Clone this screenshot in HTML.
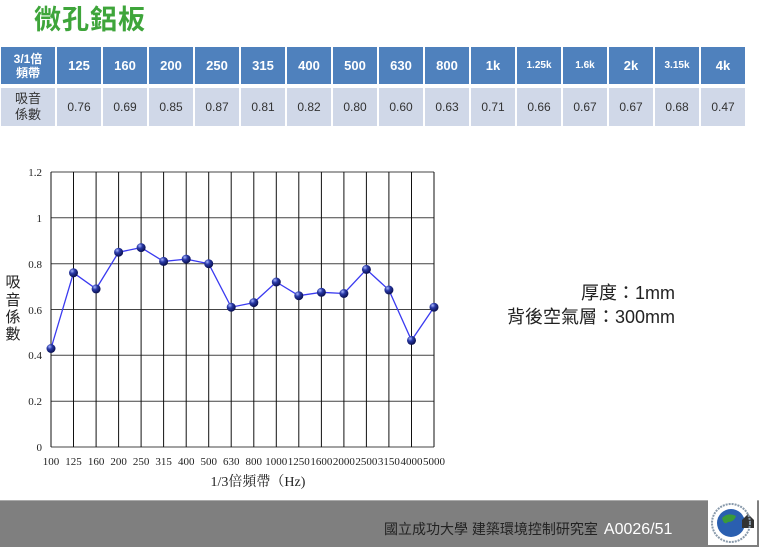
<!DOCTYPE html>
<html><head><meta charset="utf-8">
<style>
body{margin:0;width:759px;height:546px;background:#fff;position:relative;overflow:hidden;font-family:"Liberation Sans","Noto Sans CJK TC",sans-serif;}
.title{position:absolute;left:34px;top:2px;font-size:27px;color:#3ea53a;font-weight:bold;letter-spacing:1px;line-height:36px;}
table{position:absolute;left:1px;top:47px;border-collapse:separate;border-spacing:2px 4px;margin:-4px -2px;}
td{width:44px;text-align:center;padding:0;font-size:12px;}
td.f{width:54px;}
tr.h td{background:#4f81bd;color:#fff;font-weight:bold;height:37px;font-size:13px;}
tr.d td{background:#d0d8e8;color:#333;height:38px;}
.side{position:absolute;left:470px;top:281px;font-size:18px;color:#222;text-align:right;width:205px;line-height:24px;}
.foot{position:absolute;left:0;top:500px;width:759px;height:46px;background:#7f7f7f;border-top:1px solid #aaa;}
.ft{position:absolute;left:384px;top:519px;font-size:14px;color:#222;}
.ft span{color:#fff;font-size:16px;margin-left:6px;}
.logo{position:absolute;left:708px;top:500px;width:49px;height:45px;background:#fff;}
</style></head><body>
<div class="title">微孔鋁板</div>
<table>
<tr class="h"><td class="f" style="line-height:14px;font-size:12px">3/1倍<br>頻帶</td><td>125</td><td>160</td><td>200</td><td>250</td><td>315</td><td>400</td><td>500</td><td>630</td><td>800</td><td>1k</td><td style="font-size:10px">1.25k</td><td style="font-size:10px">1.6k</td><td>2k</td><td style="font-size:10px">3.15k</td><td>4k</td></tr>
<tr class="d"><td class="f" style="font-size:13px;line-height:16px;font-weight:normal">吸音<br>係數</td><td>0.76</td><td>0.69</td><td>0.85</td><td>0.87</td><td>0.81</td><td>0.82</td><td>0.80</td><td>0.60</td><td>0.63</td><td>0.71</td><td>0.66</td><td>0.67</td><td>0.67</td><td>0.68</td><td>0.47</td></tr>
</table>
<svg style="position:absolute;left:0;top:0" width="759" height="500" font-family="Liberation Serif,Noto Serif CJK SC,serif">
<defs><radialGradient id="g" cx="35%" cy="30%" r="70%"><stop offset="0" stop-color="#aab8ff"/><stop offset="0.4" stop-color="#2a3aa8"/><stop offset="1" stop-color="#0a1050"/></radialGradient></defs>
<g stroke="#444" stroke-width="1">
<line x1="51" y1="172" x2="434" y2="172"/><line x1="51" y1="217.8" x2="434" y2="217.8"/><line x1="51" y1="263.7" x2="434" y2="263.7"/><line x1="51" y1="309.5" x2="434" y2="309.5"/><line x1="51" y1="355.3" x2="434" y2="355.3"/><line x1="51" y1="401.2" x2="434" y2="401.2"/><line x1="51" y1="447" x2="434" y2="447"/>
</g>
<g stroke="#111" stroke-width="1">
<line x1="51" y1="172" x2="51" y2="447"/><line x1="73.5" y1="172" x2="73.5" y2="447"/><line x1="96.1" y1="172" x2="96.1" y2="447"/><line x1="118.6" y1="172" x2="118.6" y2="447"/><line x1="141.1" y1="172" x2="141.1" y2="447"/><line x1="163.6" y1="172" x2="163.6" y2="447"/><line x1="186.2" y1="172" x2="186.2" y2="447"/><line x1="208.7" y1="172" x2="208.7" y2="447"/><line x1="231.2" y1="172" x2="231.2" y2="447"/><line x1="253.8" y1="172" x2="253.8" y2="447"/><line x1="276.3" y1="172" x2="276.3" y2="447"/><line x1="298.8" y1="172" x2="298.8" y2="447"/><line x1="321.4" y1="172" x2="321.4" y2="447"/><line x1="343.9" y1="172" x2="343.9" y2="447"/><line x1="366.4" y1="172" x2="366.4" y2="447"/><line x1="388.9" y1="172" x2="388.9" y2="447"/><line x1="411.5" y1="172" x2="411.5" y2="447"/><line x1="434" y1="172" x2="434" y2="447"/>
</g>
<polyline fill="none" stroke="#3a3af0" stroke-width="1.3" points="51,348.5 73.5,272.8 96.1,288.9 118.6,252.2 141.1,247.6 163.6,261.4 186.2,259.1 208.7,263.7 231.2,307.2 253.8,302.6 276.3,282 298.8,295.7 321.4,292.3 343.9,293.5 366.4,269.4 388.9,290 411.5,340.4 434,307.2"/>
<g fill="url(#g)">
<circle cx="51" cy="348.5" r="4.5"/><circle cx="73.5" cy="272.8" r="4.5"/><circle cx="96.1" cy="288.9" r="4.5"/><circle cx="118.6" cy="252.2" r="4.5"/><circle cx="141.1" cy="247.6" r="4.5"/><circle cx="163.6" cy="261.4" r="4.5"/><circle cx="186.2" cy="259.1" r="4.5"/><circle cx="208.7" cy="263.7" r="4.5"/><circle cx="231.2" cy="307.2" r="4.5"/><circle cx="253.8" cy="302.6" r="4.5"/><circle cx="276.3" cy="282" r="4.5"/><circle cx="298.8" cy="295.7" r="4.5"/><circle cx="321.4" cy="292.3" r="4.5"/><circle cx="343.9" cy="293.5" r="4.5"/><circle cx="366.4" cy="269.4" r="4.5"/><circle cx="388.9" cy="290" r="4.5"/><circle cx="411.5" cy="340.4" r="4.5"/><circle cx="434" cy="307.2" r="4.5"/>
</g>
<g font-size="11" fill="#222" text-anchor="end">
<text x="42" y="176">1.2</text><text x="42" y="222">1</text><text x="42" y="268">0.8</text><text x="42" y="314">0.6</text><text x="42" y="359">0.4</text><text x="42" y="405">0.2</text><text x="42" y="451">0</text>
</g>
<g font-size="11" fill="#222" text-anchor="middle">
<text x="51" y="465">100</text><text x="73.5" y="465">125</text><text x="96.1" y="465">160</text><text x="118.6" y="465">200</text><text x="141.1" y="465">250</text><text x="163.6" y="465">315</text><text x="186.2" y="465">400</text><text x="208.7" y="465">500</text><text x="231.2" y="465">630</text><text x="253.8" y="465">800</text><text x="276.3" y="465">1000</text><text x="298.8" y="465">1250</text><text x="321.4" y="465">1600</text><text x="343.9" y="465">2000</text><text x="366.4" y="465">2500</text><text x="388.9" y="465">3150</text><text x="411.5" y="465">4000</text><text x="434" y="465">5000</text>
<text x="258" y="486" font-size="14">1/3倍頻帶（Hz)</text>
</g>
<g font-size="15" fill="#222" text-anchor="middle" font-family="Noto Sans CJK TC,sans-serif">
<text x="13" y="287">吸</text><text x="13" y="305">音</text><text x="13" y="322">係</text><text x="13" y="339">數</text>
</g>
</svg>
<div class="side">厚度：1mm<br>背後空氣層：300mm</div>
<div class="foot"></div>
<div class="ft">國立成功大學 建築環境控制研究室<span>A0026/51</span></div>
<div class="logo"><svg width="49" height="45"><circle cx="23" cy="23" r="14" fill="#2a5fb0"/><path d="M14 18 q6 -6 14 -2 q-2 6 -8 6 q-4 4 -6 -4z" fill="#3a9a3a"/><path d="M34 20 l6 -6 l6 6 v8 h-12z" fill="#333"/><circle cx="23" cy="23" r="19" fill="none" stroke="#8899aa" stroke-width="2" stroke-dasharray="2 1"/></svg></div>
</body></html>
